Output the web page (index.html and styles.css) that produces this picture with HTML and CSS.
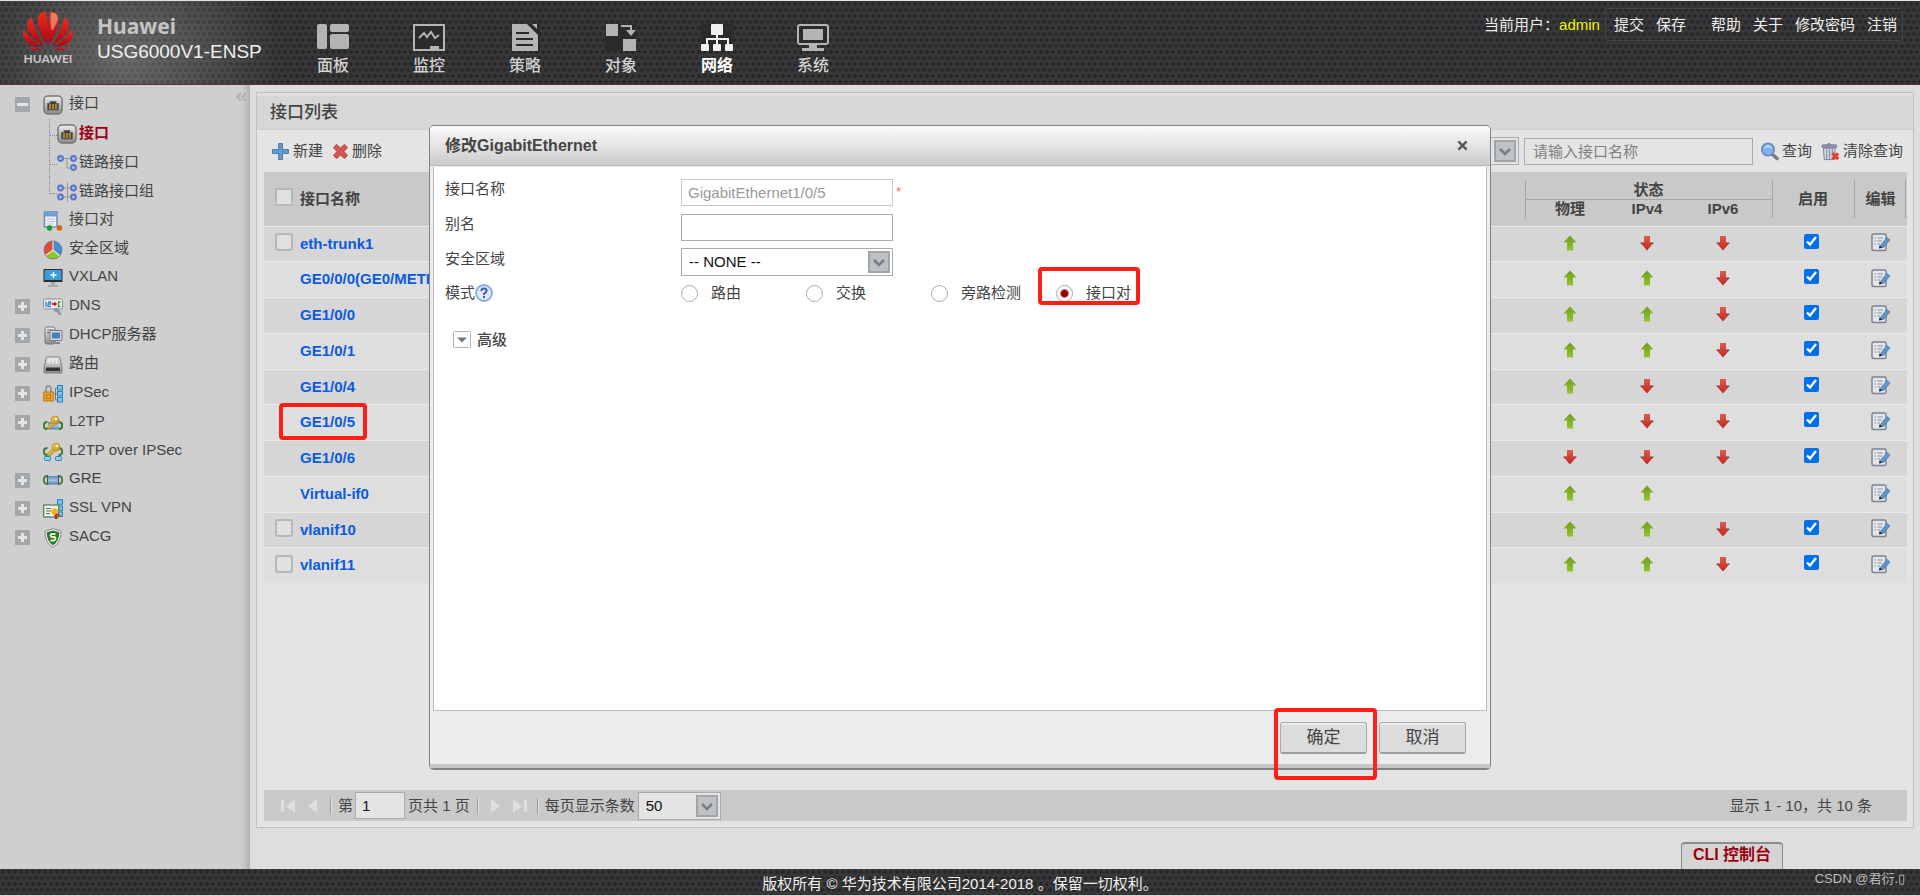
FILE: index.html
```html
<!DOCTYPE html>
<html lang="zh-CN">
<head>
<meta charset="utf-8">
<title>USG6000V1-ENSP</title>
<link rel="stylesheet" href="styles.css">
</head>
<body>
<svg class="sprite" aria-hidden="true">
  <defs>
    <linearGradient id="g-green" x1="0" y1="0" x2="0" y2="1"><stop offset="0" stop-color="#6f9e1c"/><stop offset="1" stop-color="#93c42c"/></linearGradient>
    <linearGradient id="g-red" x1="0" y1="0" x2="0" y2="1"><stop offset="0" stop-color="#e05a4c"/><stop offset="1" stop-color="#c0281e"/></linearGradient>
    <linearGradient id="g-logo" x1="0" y1="0" x2="0" y2="1"><stop offset="0" stop-color="#e5301f"/><stop offset="1" stop-color="#b00010"/></linearGradient>
    <linearGradient id="g-metal" x1="0" y1="0" x2="0" y2="1"><stop offset="0" stop-color="#efefef"/><stop offset="1" stop-color="#8a8a8a"/></linearGradient>
    <linearGradient id="g-blue" x1="0" y1="0" x2="0" y2="1"><stop offset="0" stop-color="#4f86c0"/><stop offset="0.5" stop-color="#a4c4e6"/><stop offset="1" stop-color="#4a7db5"/></linearGradient>
    <linearGradient id="g-gold" x1="0" y1="0" x2="1" y2="1"><stop offset="0" stop-color="#f6d660"/><stop offset="1" stop-color="#c08a10"/></linearGradient>
  </defs>
  <symbol id="i-up" viewBox="0 0 14 16"><path d="M7 0.500L13.500 7.500H10V15.500H4V7.500H0.500Z" fill="url(#g-green)"/></symbol>
  <symbol id="i-down" viewBox="0 0 14 16"><path d="M4 1H10V8H13.500L7 15.500L0.500 8H4Z" fill="url(#g-red)"/><path d="M0.500 8H4M10 8H13.500" stroke="#7c3430"/></symbol>
  <symbol id="i-edit" viewBox="0 0 19 19"><rect x="1" y="1" width="14" height="16.500" rx="1.500" fill="#e3e6ea" stroke="#7b838f" stroke-width="1.500"/><path d="M3.500 5H5M6.500 5H12M3.500 8H5M6.500 8H11M3.500 11H5M6.500 11H9" stroke="#8a929c" stroke-width="1.200"/><path d="M8.500 13.500L16 4.500L19 7L12.500 14.500Z" fill="#5f94c9" stroke="#4a7cb0" stroke-width="0.800"/><path d="M8 15.500L8.500 12.500L11.500 14.700Z" fill="#222"/></symbol>
  <symbol id="i-port" viewBox="0 0 20 20"><rect x="1" y="1" width="18" height="18" rx="4" fill="url(#g-metal)" stroke="#777" stroke-width="1.500"/><path d="M4.500 15V8.500H7V6.500H13V8.500H15.500V15Z" fill="#3f3f3f" stroke="#666"/><path d="M7 9V14M10 9V14M13 9V14" stroke="#c89a28" stroke-width="1.600"/></symbol>
  <symbol id="i-link" viewBox="0 0 20 18"><path d="M3 4.500H17M10 4.500V14H17" stroke="#999" fill="none"/><g fill="#aab9ee" stroke="#5a74cc" stroke-width="1.800"><circle cx="3.500" cy="4.500" r="2.500"/><circle cx="16.500" cy="4.500" r="2.500"/><circle cx="16.500" cy="13.500" r="2.500"/></g></symbol>
  <symbol id="i-linkgroup" viewBox="0 0 20 20"><path d="M3 6H17M3 15H17M10.500 0V20" stroke="#999" fill="none"/><g fill="#aab9ee" stroke="#5a74cc" stroke-width="1.800"><circle cx="3.500" cy="6" r="2.500"/><circle cx="16.500" cy="6" r="2.500"/><circle cx="3.500" cy="15" r="2.500"/><circle cx="16.500" cy="15" r="2.500"/></g></symbol>
  <symbol id="i-pair" viewBox="0 0 20 20"><rect x="1.500" y="1" width="12.500" height="15" fill="#f0f2f5" stroke="#6a88b8" stroke-width="1.500"/><rect x="2" y="1.500" width="11.500" height="4" fill="#6fa0d8"/><path d="M4 8H12M4 10.500H12M4 13H10" stroke="#b8bfc8"/><path d="M6 17H16" stroke="#ccc"/><circle cx="6.500" cy="17" r="2.700" fill="#159a2c"/><circle cx="16.500" cy="17" r="2.700" fill="#d8640c"/></symbol>
  <symbol id="i-pie" viewBox="0 0 20 20"><circle cx="10" cy="10" r="9" fill="#3c8fd8"/><path d="M10 10V1A9 9 0 0 0 2.800 15.500Z" fill="#e04a3a"/><path d="M10 10L2.800 15.500A9 9 0 0 0 16.800 16Z" fill="#8ac926"/><path d="M10 1V10L2.800 15.500M10 10L16.800 16" stroke="#f4e8c0" stroke-width="1.200" fill="none"/><circle cx="10" cy="10" r="9" fill="none" stroke="#777" stroke-width="0.800"/></symbol>
  <symbol id="i-vxlan" viewBox="0 0 20 20"><rect x="0.500" y="1" width="19" height="13" fill="#2a2e34"/><rect x="1.500" y="2" width="17" height="10" fill="#3f9ad8"/><path d="M10.500 4V10M7.500 7H13.500" stroke="#fff" stroke-width="1.300"/><path d="M8 14H12V17H15V19H5V17H8Z" fill="#aaa"/></symbol>
  <symbol id="i-dns" viewBox="0 0 20 18"><rect x="0.500" y="1" width="19" height="10" rx="1.500" fill="#eee" stroke="#8a8a8a"/><path d="M3 3.500V9M5 4H7.500V6H5V8.500H8" stroke="#2a86c8" stroke-width="1.300" fill="none"/><path d="M9 6H12" stroke="#c00" stroke-width="1.600"/><path d="M11.500 3.500L14 6L11.500 8.500Z" fill="#c00"/><path d="M17.500 4H15.500V8.500H17.500" stroke="#3a9a28" stroke-width="1.400" fill="none"/><path d="M11 10.500L14 9.500L16 12L18.500 16L16.500 17.500L13.500 14L11 13.500Z" fill="#8d97b0"/></symbol>
  <symbol id="i-dhcp" viewBox="0 0 20 20"><rect x="2" y="1" width="10" height="17" rx="2" fill="url(#g-metal)" stroke="#777"/><path d="M4 4H10M4 6.500H8" stroke="#666"/><rect x="7" y="4.500" width="12" height="10" rx="1" fill="#d8d8d8" stroke="#777"/><rect x="9" y="6.500" width="8" height="6" fill="#3f7fbe"/><path d="M10 17H17" stroke="#888" stroke-width="2"/></symbol>
  <symbol id="i-route" viewBox="0 0 20 18"><path d="M3.500 1H16.500L19 11V16Q19 17 18 17H2Q1 17 1 16V11Z" fill="url(#g-metal)" stroke="#808080"/><rect x="3" y="11.500" width="14" height="3.500" fill="#333"/><path d="M7 3L6 8M10 3V8M13 3L14 8" stroke="#fff" stroke-width="0.800"/></symbol>
  <symbol id="i-ipsec" viewBox="0 0 20 20"><path d="M3 9V4.500Q3 2 5.500 2T8 4.500V9" fill="none" stroke="#999" stroke-width="2"/><rect x="0.700" y="8" width="9.600" height="9" fill="#eba52c" stroke="#b87810"/><rect x="3.500" y="10.500" width="4" height="4" fill="none" stroke="#b87810"/><path d="M11 10H15M12.500 4V16M12.500 4H15M12.500 16H15" stroke="#777" fill="none"/><g fill="#7cc4ee" stroke="#2386c0"><rect x="14.500" y="1.500" width="5" height="4.500"/><rect x="14.500" y="7.500" width="5" height="4.500"/><rect x="14.500" y="13.500" width="5" height="4.500"/></g></symbol>
  <symbol id="i-gre" viewBox="0 0 20 20"><path d="M4.500 6Q0.800 6 0.800 10T4.500 14M15.500 6Q19.200 6 19.200 10T15.500 14" fill="none" stroke="#3f7d35" stroke-width="1.800"/><rect x="4" y="6" width="12" height="8.500" rx="1" fill="url(#g-blue)"/><path d="M4.500 5V15M15.500 5V15" stroke="#555" stroke-width="1.200"/></symbol>
  <symbol id="i-l2tp" viewBox="0 0 20 20"><path d="M4.500 9Q0.800 9 0.800 12.500T4.500 16M15.500 9Q19.200 9 19.200 12.500T15.500 16" fill="none" stroke="#3f7d35" stroke-width="2"/><rect x="5" y="9" width="10.500" height="7.500" rx="1" fill="url(#g-blue)"/><path d="M4.500 14L10 8L13 10L7.500 15.500H4.500Z" fill="url(#g-gold)" stroke="#a87c10" stroke-width="0.600"/><circle cx="12" cy="7" r="4" fill="url(#g-gold)" stroke="#a87c10" stroke-width="0.600"/><circle cx="13" cy="6" r="1.200" fill="#fff"/></symbol>
  <symbol id="i-l2tpipsec" viewBox="0 0 20 20"><path d="M4.500 6Q0.800 6 0.800 9.500T4.500 13M15.500 6Q19.200 6 19.200 9.500T15.500 13" fill="none" stroke="#3f7d35" stroke-width="2"/><path d="M4.500 11.500L10 6L13 8L7.500 13.500H4.500Z" fill="url(#g-gold)" stroke="#a87c10" stroke-width="0.600"/><circle cx="13" cy="5" r="4" fill="url(#g-gold)" stroke="#a87c10" stroke-width="0.600"/><circle cx="14" cy="4" r="1.200" fill="#fff"/><g fill="#8bcdf0" stroke="#2386c0"><rect x="1.500" y="14.500" width="6" height="4" rx="1"/><rect x="12.500" y="14.500" width="6" height="4" rx="1"/></g></symbol>
  <symbol id="i-ssl" viewBox="0 0 20 20"><g fill="#7cc4ee" stroke="#2386c0"><rect x="14.500" y="0.700" width="5" height="4.500"/><rect x="14.500" y="7" width="5" height="4.500"/><rect x="14.500" y="13" width="5" height="4.500"/></g><rect x="0.700" y="6" width="15" height="12" fill="#f2f4e8" stroke="#4d8a54" stroke-width="1.300"/><path d="M3 9.500H8M3 12H8M3 14.500H7" stroke="#4d7a54"/><path d="M10 16L14 14L18 17Z" fill="#c81818"/><path d="M13 14V20" stroke="#c81818" stroke-width="2.500"/><circle cx="11.500" cy="12.500" r="3.200" fill="#f2b01e"/></symbol>
  <symbol id="i-sacg" viewBox="0 0 20 20"><path d="M10 0.700L18 3Q18.500 14 10 19.500Q1.500 14 2 3Z" fill="#f1f1f1" stroke="#888"/><path d="M10 2.500L16.300 4.300Q16.500 13 10 17.500Q3.500 13 3.700 4.300Z" fill="#2c7a22"/><path d="M12.500 6H9Q7.500 6 7.500 7.500T9 9H11Q12.500 9 12.500 10.500T11 12.500H7.500" fill="none" stroke="#e8f5d8" stroke-width="1.800"/></symbol>
  <symbol id="i-plus" viewBox="0 0 19 19"><path d="M7.500 1.500H11.500V7.500H17.500V11.500H11.500V17.500H7.500V11.500H1.500V7.500H7.500Z" fill="#5f9acb" stroke="#4d80b0"/></symbol>
  <symbol id="i-cross" viewBox="0 0 17 17"><path d="M1.500 4.500L4.500 1.500L8.500 5L12.500 1.500L15.500 4.500L12 8.500L15.500 12.500L12.500 15.500L8.500 12L4.500 15.500L1.500 12.500L5 8.500Z" fill="#d8564e" stroke="#b04440"/></symbol>
  <symbol id="i-search" viewBox="0 0 19 19"><path d="M12 12L17 16.500" stroke="#777c84" stroke-width="3.500" stroke-linecap="round"/><circle cx="8" cy="7.500" r="6.200" fill="#7fb2f0" stroke="#6a85b8" stroke-width="1.600"/><path d="M4.500 6Q8 2.500 11.500 6" stroke="#cfe4ff" stroke-width="1.500" fill="none"/></symbol>
  <symbol id="i-trash" viewBox="0 0 20 19"><path d="M6 2.500Q8.500 -0.500 11 2.500" fill="none" stroke="#667"/><rect x="1" y="2.500" width="15.500" height="3" rx="1" fill="#8f93b4" stroke="#6d7090" stroke-width="0.800"/><path d="M2.500 6H15L14 18H3.500Z" fill="#d4d6e0" stroke="#7c7f9e"/><path d="M6 7V17M9 7V17M12 7V12" stroke="#8c8fae" stroke-width="1.300"/><path d="M12 11.500L18 17.500M18 11.500L12 17.500" stroke="#e0402a" stroke-width="3.600"/></symbol>
  <symbol id="i-caret" viewBox="0 0 22 22"><rect x="1" y="1" width="20" height="20" fill="#bfc2c5" stroke="#a2a5a8" stroke-width="2"/><path d="M6 9L11 14L16 9" fill="none" stroke="#7a7d80" stroke-width="2.500"/></symbol>
</svg>

<header class="top">
  <div class="brand">
    <svg class="brand-mark" viewBox="0 0 50 55" aria-hidden="true">
      <g id="petals" fill="url(#g-logo)">
        <path d="M24 34C18 25 13 13 15 5C17 2 20 0.500 22.500 0.500C25.500 10 25.500 22 24 34Z"/>
        <path d="M21 35C12 29 3 21 4 13C5 9 7 7 9 6C10.500 15 14.500 25 21 35Z"/>
        <path d="M18.500 35.500C10 36 3 32 1 27C-0.500 23 0 21 0.700 19C5.500 25 11.500 31 18.500 35.500Z"/>
        <path d="M6 36L18.500 37.500C15 40 9 40 6 36Z"/>
      </g>
      <use href="#petals" transform="matrix(-1 0 0 1 50 0)"/>
      <path d="M28 2Q34 1 35 7Q34 13 29 20Q26.500 12 28 2Z" fill="#f0a080" opacity="0.700"/>
      <text class="brand-word" x="25" y="52" text-anchor="middle">HUAWEI</text>
    </svg>
    <div>
      <div class="brand-name">Huawei</div>
      <div class="brand-model">USG6000V1-ENSP</div>
    </div>
  </div>
  <nav class="nav">
    <a href="#panel"><svg viewBox="0 0 32 28"><g fill="#b4b4b4"><rect width="10" height="25" rx="2"/><rect x="13" width="19" height="8" rx="2"/><rect x="13" y="10" width="19" height="15" rx="2"/></g></svg>面板</a>
    <a href="#monitor"><svg viewBox="0 0 32 28"><rect x="1" y="1" width="30" height="25" fill="#2b2b2b" stroke="#b4b4b4" stroke-width="2"/><path d="M6 14L11 9L14 13L18 8L22 14L26 11" fill="none" stroke="#b4b4b4" stroke-width="2"/><rect x="17" y="22" width="9" height="4" fill="#b4b4b4"/></svg>监控</a>
    <a href="#policy"><svg viewBox="0 0 32 28"><rect x="2" width="29" height="27" fill="#2b2b2b"/><path d="M3 0H18L29 11V27H3Z" fill="#b4b4b4"/><path d="M23 0H28V5Z" fill="#b4b4b4"/><path d="M7 9H20M7 15H24M7 21H24" stroke="#2b2b2b" stroke-width="2"/></svg>策略</a>
    <a href="#object"><svg viewBox="0 0 32 28"><rect width="31" height="27" fill="#2b2b2b"/><g fill="#b4b4b4"><rect x="1" width="12" height="12"/><rect x="18" y="15" width="13" height="12"/><path d="M21 6H31L26 12Z"/></g><path d="M16 2H26V8" fill="none" stroke="#b4b4b4" stroke-width="2"/></svg>对象</a>
    <a href="#network" class="on"><svg viewBox="0 0 32 28"><rect width="32" height="27" fill="#2b2b2b"/><g fill="#f0f0f0"><rect x="10" width="12" height="11" rx="1"/><rect y="20" width="8" height="7" rx="1"/><rect x="12" y="20" width="8" height="7" rx="1"/><rect x="24" y="20" width="8" height="7" rx="1"/></g><path d="M16 10V20M6 20V15H27V20" fill="none" stroke="#f0f0f0" stroke-width="2"/></svg>网络</a>
    <a href="#system"><svg viewBox="0 0 32 28"><rect x="1" y="1" width="30" height="19" rx="2" fill="#2b2b2b" stroke="#b4b4b4" stroke-width="2"/><rect x="6" y="5" width="20" height="11" fill="#b4b4b4"/><path d="M12 20H20V24H27V27H5V24H12Z" fill="#b4b4b4"/></svg>系统</a>
  </nav>
  <div class="user">
    <span>当前用户：<span class="user-name">admin</span></span>
    <div class="user-links">
      <a href="#commit">提交</a><a href="#save">保存</a><a href="#help" class="apart">帮助</a><a href="#about">关于</a><a href="#password">修改密码</a><a href="#logout">注销</a>
    </div>
  </div>
</header>

<div class="middle">
  <aside class="side">
    <button class="fold" type="button" aria-label="收起"><svg viewBox="0 0 12 10"><path d="M5 1L1.500 5L5 9M10 1L6.500 5L10 9" fill="none" stroke="#b0b0b0" stroke-width="2"/></svg></button>
    <ul class="tree">
      <li><span class="box open"></span><svg class="ico"><use href="#i-port"/></svg><a href="#if">接口</a></li>
      <li class="sub"><svg class="ico"><use href="#i-port"/></svg><a href="#if1" class="on">接口</a></li>
      <li class="sub"><svg class="ico"><use href="#i-link"/></svg><a href="#if2">链路接口</a></li>
      <li class="sub last"><svg class="ico"><use href="#i-linkgroup"/></svg><a href="#if3">链路接口组</a></li>
      <li><svg class="ico"><use href="#i-pair"/></svg><a href="#pair">接口对</a></li>
      <li><svg class="ico"><use href="#i-pie"/></svg><a href="#zone">安全区域</a></li>
      <li class="tight"><svg class="ico"><use href="#i-vxlan"/></svg><a href="#vxlan">VXLAN</a></li>
      <li><span class="box"></span><svg class="ico"><use href="#i-dns"/></svg><a href="#dns">DNS</a></li>
      <li><span class="box"></span><svg class="ico"><use href="#i-dhcp"/></svg><a href="#dhcp">DHCP服务器</a></li>
      <li><span class="box"></span><svg class="ico"><use href="#i-route"/></svg><a href="#route">路由</a></li>
      <li><span class="box"></span><svg class="ico"><use href="#i-ipsec"/></svg><a href="#ipsec">IPSec</a></li>
      <li><span class="box"></span><svg class="ico"><use href="#i-l2tp"/></svg><a href="#l2tp">L2TP</a></li>
      <li><svg class="ico"><use href="#i-l2tpipsec"/></svg><a href="#l2tpipsec">L2TP over IPSec</a></li>
      <li class="tight"><span class="box"></span><svg class="ico"><use href="#i-gre"/></svg><a href="#gre">GRE</a></li>
      <li><span class="box"></span><svg class="ico"><use href="#i-ssl"/></svg><a href="#ssl">SSL VPN</a></li>
      <li><span class="box"></span><svg class="ico"><use href="#i-sacg"/></svg><a href="#sacg">SACG</a></li>
    </ul>
  </aside>

  <main class="main">
    <section class="panel">
      <h1 class="panel-title">接口列表</h1>
      <div class="tools">
        <button type="button" class="tool"><svg class="t19"><use href="#i-plus"/></svg>新建</button>
        <button type="button" class="tool"><svg class="t17"><use href="#i-cross"/></svg>删除</button>
        <span class="pick filter"><select aria-label="过滤条件"><option></option></select><svg><use href="#i-caret"/></svg></span>
        <input class="field find" type="text" aria-label="接口名称" placeholder="请输入接口名称">
        <button type="button" class="tool"><svg class="t19"><use href="#i-search"/></svg>查询</button>
        <button type="button" class="tool"><svg class="t19"><use href="#i-trash"/></svg>清除查询</button>
      </div>
      <table class="grid">
        <colgroup><col class="c-check"><col><col class="c-phy"><col class="c-v4"><col class="c-v6"><col class="c-use"><col class="c-edit"></colgroup>
        <thead>
          <tr><th rowspan="2" class="chk"><input type="checkbox" class="tick" aria-label="全选"></th><th rowspan="2" class="name">接口名称</th><th colspan="3" class="state">状态</th><th rowspan="2" class="bar">启用</th><th rowspan="2" class="bar bar-end">编辑</th></tr>
          <tr><th class="half first">物理</th><th class="half">IPv4</th><th class="half v6">IPv6</th></tr>
        </thead>
        <tbody>
          <tr><td class="chk"><input type="checkbox" class="tick" aria-label="eth-trunk1"></td><td class="name"><a href="#r1">eth-trunk1</a></td><td><svg class="arr"><use href="#i-up"/></svg></td><td><svg class="arr"><use href="#i-down"/></svg></td><td class="v6"><svg class="arr"><use href="#i-down"/></svg></td><td class="on-off"><input type="checkbox" class="use" aria-label="启用" checked></td><td><svg class="ed"><use href="#i-edit"/></svg></td></tr>
          <tr><td></td><td class="name"><a href="#r2">GE0/0/0(GE0/METH)</a></td><td><svg class="arr"><use href="#i-up"/></svg></td><td><svg class="arr"><use href="#i-up"/></svg></td><td class="v6"><svg class="arr"><use href="#i-down"/></svg></td><td class="on-off"><input type="checkbox" class="use" aria-label="启用" checked></td><td><svg class="ed"><use href="#i-edit"/></svg></td></tr>
          <tr><td></td><td class="name"><a href="#r3">GE1/0/0</a></td><td><svg class="arr"><use href="#i-up"/></svg></td><td><svg class="arr"><use href="#i-up"/></svg></td><td class="v6"><svg class="arr"><use href="#i-down"/></svg></td><td class="on-off"><input type="checkbox" class="use" aria-label="启用" checked></td><td><svg class="ed"><use href="#i-edit"/></svg></td></tr>
          <tr><td></td><td class="name"><a href="#r4">GE1/0/1</a></td><td><svg class="arr"><use href="#i-up"/></svg></td><td><svg class="arr"><use href="#i-up"/></svg></td><td class="v6"><svg class="arr"><use href="#i-down"/></svg></td><td class="on-off"><input type="checkbox" class="use" aria-label="启用" checked></td><td><svg class="ed"><use href="#i-edit"/></svg></td></tr>
          <tr><td></td><td class="name"><a href="#r5">GE1/0/4</a></td><td><svg class="arr"><use href="#i-up"/></svg></td><td><svg class="arr"><use href="#i-down"/></svg></td><td class="v6"><svg class="arr"><use href="#i-down"/></svg></td><td class="on-off"><input type="checkbox" class="use" aria-label="启用" checked></td><td><svg class="ed"><use href="#i-edit"/></svg></td></tr>
          <tr><td></td><td class="name"><a href="#r6" class="marked">GE1/0/5<span class="mark mark-row"></span></a></td><td><svg class="arr"><use href="#i-up"/></svg></td><td><svg class="arr"><use href="#i-down"/></svg></td><td class="v6"><svg class="arr"><use href="#i-down"/></svg></td><td class="on-off"><input type="checkbox" class="use" aria-label="启用" checked></td><td><svg class="ed"><use href="#i-edit"/></svg></td></tr>
          <tr><td></td><td class="name"><a href="#r7">GE1/0/6</a></td><td><svg class="arr"><use href="#i-down"/></svg></td><td><svg class="arr"><use href="#i-down"/></svg></td><td class="v6"><svg class="arr"><use href="#i-down"/></svg></td><td class="on-off"><input type="checkbox" class="use" aria-label="启用" checked></td><td><svg class="ed"><use href="#i-edit"/></svg></td></tr>
          <tr><td></td><td class="name"><a href="#r8">Virtual-if0</a></td><td><svg class="arr"><use href="#i-up"/></svg></td><td><svg class="arr"><use href="#i-up"/></svg></td><td></td><td></td><td><svg class="ed"><use href="#i-edit"/></svg></td></tr>
          <tr><td class="chk"><input type="checkbox" class="tick" aria-label="vlanif10"></td><td class="name"><a href="#r9">vlanif10</a></td><td><svg class="arr"><use href="#i-up"/></svg></td><td><svg class="arr"><use href="#i-up"/></svg></td><td class="v6"><svg class="arr"><use href="#i-down"/></svg></td><td class="on-off"><input type="checkbox" class="use" aria-label="启用" checked></td><td><svg class="ed"><use href="#i-edit"/></svg></td></tr>
          <tr><td class="chk"><input type="checkbox" class="tick" aria-label="vlanif11"></td><td class="name"><a href="#r10">vlanif11</a></td><td><svg class="arr"><use href="#i-up"/></svg></td><td><svg class="arr"><use href="#i-up"/></svg></td><td class="v6"><svg class="arr"><use href="#i-down"/></svg></td><td class="on-off"><input type="checkbox" class="use" aria-label="启用" checked></td><td><svg class="ed"><use href="#i-edit"/></svg></td></tr>
        </tbody>
      </table>
      <div class="pager">
        <button type="button" aria-label="首页"><svg viewBox="0 0 16 16"><path d="M1 2H4V14H1ZM15 1V15L6 8Z"/></svg></button>
        <button type="button" aria-label="上一页"><svg viewBox="0 0 16 16"><path d="M12 1V15L3 8Z"/></svg></button>
        <i class="sep"></i>
        <label for="page">第</label><input id="page" class="field page" type="text" value="1"><span>页共 1 页</span>
        <i class="sep"></i>
        <button type="button" aria-label="下一页"><svg viewBox="0 0 16 16"><path d="M4 1V15L13 8Z"/></svg></button>
        <button type="button" aria-label="末页"><svg viewBox="0 0 16 16"><path d="M15 2H12V14H15ZM1 1V15L10 8Z"/></svg></button>
        <i class="sep"></i>
        <label for="size">每页显示条数</label><span class="pick size"><select id="size"><option>50</option></select><svg><use href="#i-caret"/></svg></span>
        <span class="total">显示 1 - 10，共 10 条</span>
      </div>
    </section>
    <div class="below"><button type="button" class="cli">CLI 控制台</button></div>
  </main>
</div>

<footer class="foot">
  <span>版权所有 © 华为技术有限公司2014-2018 。保留一切权利。</span>
  <span class="stamp">CSDN @君衍.▯</span>
</footer>

<div class="layer">
  <div class="dialog" role="dialog" aria-labelledby="dlg-title">
    <div class="dialog-head">
      <h2 id="dlg-title">修改GigabitEthernet</h2>
      <button type="button" class="close" aria-label="关闭"><svg viewBox="0 0 12 12"><path d="M1.500 1.500L10.500 10.500M10.500 1.500L1.500 10.500" stroke="#555" stroke-width="2.500"/></svg></button>
    </div>
    <form class="dialog-body">
      <div class="line"><label for="ifname">接口名称</label><input id="ifname" class="field" type="text" value="GigabitEthernet1/0/5" disabled><span class="must">*</span></div>
      <div class="line"><label for="alias">别名</label><input id="alias" class="field" type="text"></div>
      <div class="line"><label for="zone">安全区域</label><span class="pick"><select id="zone"><option>-- NONE --</option></select><svg><use href="#i-caret"/></svg></span></div>
      <div class="line modes" role="radiogroup" aria-label="模式">
        <span class="line-name">模式<svg class="help" viewBox="0 0 18 18"><circle cx="9" cy="9" r="8" fill="#dfe9f8" stroke="#8aaae0" stroke-width="1.800"/><path d="M6.300 7Q6.500 4.500 9 4.500T11.700 6.800Q11.700 8.200 9 9.800V11" fill="none" stroke="#3c62ac" stroke-width="2"/><rect x="8" y="12" width="2" height="2" fill="#3c62ac"/></svg></span>
        <label class="opt"><input type="radio" name="mode">路由</label>
        <label class="opt"><input type="radio" name="mode">交换</label>
        <label class="opt"><input type="radio" name="mode">旁路检测</label>
        <label class="opt marked"><input type="radio" name="mode" checked>接口对<span class="mark mark-opt"></span></label>
      </div>
      <button type="button" class="more"><svg viewBox="0 0 18 18"><rect x="0.500" y="0.500" width="17" height="16" rx="1" fill="#fdfdfd" stroke="#b4b4b4"/><path d="M4 6.500H14L9 11.500Z" fill="#777"/></svg>高级</button>
    </form>
    <div class="dialog-foot">
      <span class="marked"><button type="button" class="btn">确定</button><span class="mark mark-ok"></span></span>
      <button type="button" class="btn">取消</button>
    </div>
  </div>
</div>
</body>
</html>
```

FILE: styles.css
```css
* { box-sizing: border-box; }

body {
  margin: 0;
  min-height: 100vh;
  display: flex;
  flex-direction: column;
  background: #dedede;
  color: #444;
  font: 15px/20px "Liberation Sans", "Noto Sans CJK SC", sans-serif;
}

a { color: inherit; text-decoration: none; }
button, input, select { font: inherit; color: inherit; margin: 0; }
button { background: none; border: 0; padding: 0; }
svg { display: block; flex: none; }
.sprite { position: absolute; width: 0; height: 0; }

/* dark perforated bars */
.top, .foot {
  background-color: #39393b;
  background-image:
    radial-gradient(circle at 3px 3px, #262628 1px, transparent 3px),
    radial-gradient(circle at 3px 3px, #262628 1px, transparent 3px);
  background-size: 6px 12px;
  background-position: 0 0, 3px 6px;
}

.top {
  display: flex;
  height: 85px;
  border-top: 1px solid #dfe3e3;
  border-bottom: 1px solid #5a2f32;
  position: relative;
}
.top::before {
  content: "";
  position: absolute;
  inset: 0 auto 0 0;
  width: 300px;
  background: radial-gradient(ellipse 160px 130px at 125px 55px, rgba(255,255,255,.26), transparent);
}
.brand { display: flex; gap: 24px; width: 285px; padding: 10px 0 0 23px; position: relative; }
.brand-mark { width: 50px; height: 55px; }
.brand-word { font: bold 12px Lato, sans-serif; fill: #c8c8c8; }
.brand-name { font: bold 21px/30px "Noto Sans", sans-serif; color: #c4c4c4; }
.brand-model { font-size: 19px; line-height: 22px; color: #f0f0f0; }

.nav { display: flex; position: relative; }
.nav a {
  width: 96px;
  padding-top: 23px;
  display: flex;
  flex-direction: column;
  align-items: center;
  gap: 3px;
  font-size: 16px;
  line-height: 22px;
  font-weight: 500;
  color: #d2d2d2;
}
.nav svg { width: 32px; height: 28px; }
.nav .on { color: #fff; font-weight: bold; }

.user { margin-left: auto; display: flex; gap: 5px; padding: 7px 17px 0 0; color: #eee; line-height: 34px; }
.user-name { color: #f4f400; }
.user-links { display: flex; gap: 12px; height: 33px; padding: 0 5px 0 8px; border: 1px solid #444446; border-radius: 3px; line-height: 32px; }
.user-links .apart { margin-left: 13px; }

.middle { flex: 1; display: flex; }

/* side tree */
.side {
  width: 250px;
  position: relative;
  background: linear-gradient(to right, transparent 240px, #c2c2c2 246px, #aeaeae 250px) #cfcfcf;
}
.fold { position: absolute; right: 0; top: 6px; width: 14px; height: 12px; }
.fold svg { width: 12px; height: 10px; }
.tree { list-style: none; margin: 0; padding: 5px 0 0; }
.tree li { display: flex; align-items: center; height: 29px; padding-left: 43px; position: relative; }
.tree .tight { height: 28px; }
.tree a { margin-left: 6px; padding-bottom: 4px; }
.tree .ico { width: 20px; height: 20px; }
.tree .sub { padding-left: 57px; }
.tree .sub a { margin-left: 2px; padding-bottom: 2px; }
.tree .on { color: #a00010; font-weight: bold; }
.tree .sub::before {
  content: "";
  position: absolute;
  left: 49px;
  top: 0;
  bottom: 0;
  border-left: 1px dotted #888;
}
.tree .sub.last::before { bottom: 12px; }
.tree .sub::after { content: ""; position: absolute; left: 50px; top: 16px; width: 7px; border-top: 1px dotted #888; }
.box {
  position: absolute;
  left: 15px;
  width: 15px;
  height: 15px;
  background:
    linear-gradient(#e4e4e4, #e4e4e4) center / 9px 3px no-repeat,
    linear-gradient(#e4e4e4, #e4e4e4) center / 3px 9px no-repeat,
    #a3a7aa;
}
.box.open { background: linear-gradient(#e4e4e4, #e4e4e4) center / 11px 3px no-repeat, #a3a7aa; }

/* list panel */
.main { flex: 1; min-width: 0; display: flex; flex-direction: column; padding: 7px 6px 0 6px; }
.panel { flex: 1; display: flex; flex-direction: column; border: 1px solid #bfc0c2; background: #e4e4e4; padding-bottom: 6px; }
.panel-title {
  margin: 0;
  padding-left: 13px;
  height: 37px;
  font-size: 17px;
  line-height: 34px;
  font-weight: 500;
  border-top: 3px solid #e0e0e0;
  border-bottom: 1px solid #cfcfcf;
  background: #d7d7d7;
}
.tools { display: flex; align-items: center; height: 42px; padding: 0 10px 0 14px; gap: 9px; }
.tool { display: flex; align-items: center; gap: 3px; white-space: nowrap; }
.t19 { width: 19px; height: 19px; }
.t17 { width: 17px; height: 17px; }
.field { height: 27px; border: 1px solid #a9abae; background: transparent; padding: 0 6px; border-radius: 0; }
.find { width: 229px; margin: 0 -2px 0 -4px; padding-left: 8px; }
.find::placeholder { color: #808080; opacity: 1; }
.pick { position: relative; display: block; }
.pick select {
  appearance: none;
  display: block;
  width: 100%;
  height: 28px;
  padding: 0 26px 0 7px;
  border: 1px solid #a9abae;
  border-radius: 0;
  background: transparent;
  color: #111;
}
.pick svg { position: absolute; right: 3px; top: 3px; width: 22px; height: 22px; pointer-events: none; }
.filter { width: 200px; margin-left: auto; }

.grid { table-layout: fixed; border-collapse: collapse; margin: 0 6px 0 7px; }
.c-check { width: 36px; }
.c-phy { width: 90px; }
.c-v4 { width: 64px; }
.c-v6 { width: 93px; }
.c-use { width: 82px; }
.c-edit { width: 53px; }
.grid th, .grid td { padding: 0; text-align: center; }
.grid th.name, .grid td.name { text-align: left; }
.grid thead { background: #c9c9c9; }
.grid thead tr { height: 27px; }
.grid th { background-repeat: no-repeat; font-weight: bold; line-height: 19px; }
.grid th.state {
  vertical-align: bottom;
  border-bottom: 1px solid #a6a6a6;
  background-image: linear-gradient(#a6a6a6, #a6a6a6);
  background-size: 1px 19px;
  background-position: 0 100%;
}
.grid th.half { vertical-align: top; line-height: 18px; }
.grid th.first { background-image: linear-gradient(#a6a6a6, #a6a6a6); background-size: 1px 19px; }
.grid th.bar { background-image: linear-gradient(#a6a6a6, #a6a6a6); background-size: 1px 38px; background-position: 0 8px; }
.grid th.bar-end {
  background-image: linear-gradient(#a6a6a6, #a6a6a6), linear-gradient(#a6a6a6, #a6a6a6);
  background-position: 0 8px, 51px 8px;
}
.grid .v6 { padding-right: 5px; }
.grid tbody tr { height: 36px; background: #dedede; border-top: 1px solid #eaeaea; }
.grid tbody tr:nth-child(odd) { background: #d6d6d6; }
.grid tbody tr:nth-child(4n+1) { height: 35px; }
.grid td { padding-bottom: 2px; }
.grid td.name { padding-bottom: 0; }
.grid td.name a { color: #0a5be0; font-weight: bold; }
.grid td.chk, .grid th.chk { padding-bottom: 3px; }
.grid td.on-off { padding: 0 3px 5px 0; }
.grid input { display: block; }
.tick { appearance: none; width: 18px; height: 18px; margin-left: 11px; border: 2px solid #b4b6b8; border-radius: 3px; background: #e0e0e0; }
.grid .tick { margin-left: 11px; }
.grid .use { width: 15px; height: 15px; margin: 0 auto; accent-color: #006fe8; }
.arr { width: 14px; height: 16px; margin: 0 auto; }
.ed { width: 19px; height: 19px; margin: 0 auto; }

.pager { display: flex; align-items: center; height: 31px; margin: auto 6px 0 7px; padding: 0 35px 0 16px; background: #c9c9c9; white-space: nowrap; }
.pager button { width: 16px; height: 16px; margin-right: 9px; }
.pager button svg { width: 16px; height: 16px; fill: #dedede; }
.pager .sep { width: 2px; height: 16px; margin: 0 6px 0 0; border-left: 1px solid #999; border-right: 1px solid #e4e4e4; }
.pager span + .sep { margin: 0 8px 0 7px; }
.page { width: 50px; margin: 0 3px 0 2px; background: #e4e4e4; color: #111; }
.size { width: 83px; margin-left: 3px; }
.size select { background: #e4e4e4; }
.total { margin-left: auto; }

.below { height: 41px; display: flex; justify-content: flex-end; align-items: flex-end; padding-right: 131px; }
.cli { height: 27px; width: 102px; padding-bottom: 3px; border: 1px solid #8c8c8c; border-width: 2px 1px 0; border-radius: 4px 4px 0 0; background: #d4d4d4; color: #9c0010; font-size: 16px; font-weight: bold; white-space: nowrap; }

.foot { height: 26px; display: flex; justify-content: center; position: relative; color: #f0f0f0; line-height: 30px; }
.stamp { position: absolute; right: 15px; top: 0; font-size: 13px; line-height: 19px; color: #bdbdbd; }

/* edit dialog */
.layer { position: fixed; inset: 0; display: flex; align-items: center; justify-content: center; }
.dialog { width: 1062px; border: 1px solid #828282; border-bottom-width: 2px; border-radius: 5px; background: #ececec; }
.dialog-head {
  display: flex;
  align-items: center;
  justify-content: space-between;
  height: 40px;
  padding: 0 22px 0 15px;
  border-bottom: 1px solid #b8b8b8;
  border-radius: 4px 4px 0 0;
  background: linear-gradient(#fafafa, #e6e6e6 45%, #cbcbcb);
}
.dialog-head h2 { margin: 0; font-size: 16px; line-height: 24px; font-weight: bold; }
.close svg { width: 11px; height: 11px; }
.dialog-body { min-height: 544px; margin: 1px 3px 0; padding: 11px; background: #fff; border: 1px solid #b8b8b8; border-top: 0; }
.line { display: flex; align-items: center; height: 28px; margin-bottom: 7px; }
.line > label:first-child, .line-name { width: 236px; padding-bottom: 6px; display: flex; align-items: center; }
.line .field, .line .pick { width: 212px; }
.line .field:disabled { color: #999; border-color: #c8c8c8; }
.must { color: #f66; font-size: 13px; margin-left: 3px; }
.modes { height: 20px; }
.modes .line-name { padding-bottom: 0; }
.help { width: 18px; height: 18px; }
.opt { display: flex; align-items: center; gap: 13px; width: 125px; white-space: nowrap; }
.opt input { appearance: none; width: 17px; height: 17px; border: 1px solid #aaa; border-radius: 50%; background: #fff; }
.opt input:checked { background: radial-gradient(circle, #950008 3px, #fff 5px); }
.more { display: flex; align-items: center; gap: 6px; margin: 25px 0 0 8px; font-weight: 500; line-height: 24px; }
.more svg { width: 18px; height: 18px; }
.dialog-foot { display: flex; justify-content: flex-end; gap: 12px; padding: 11px 24px 10px; border-bottom: 4px solid #c6c6c6; }
.btn { width: 87px; height: 32px; border: 1px solid #a9a9ae; border-bottom: 2px solid #9c9ca2; border-radius: 3px; background: #dcdcdc; box-shadow: inset 0 2px #ececec; font-size: 17px; display: block; }

/* red call-out frames */
.marked { position: relative; }
.mark { position: absolute; border: 4px solid #ff1f14; border-radius: 4px; pointer-events: none; }
.mark-row { inset: -10px -12px -10px -21px; }
.mark-opt { left: -18px; top: -16px; width: 102px; height: 38px; }
.mark-ok { inset: -14px -10px -26px -6px; }
```
